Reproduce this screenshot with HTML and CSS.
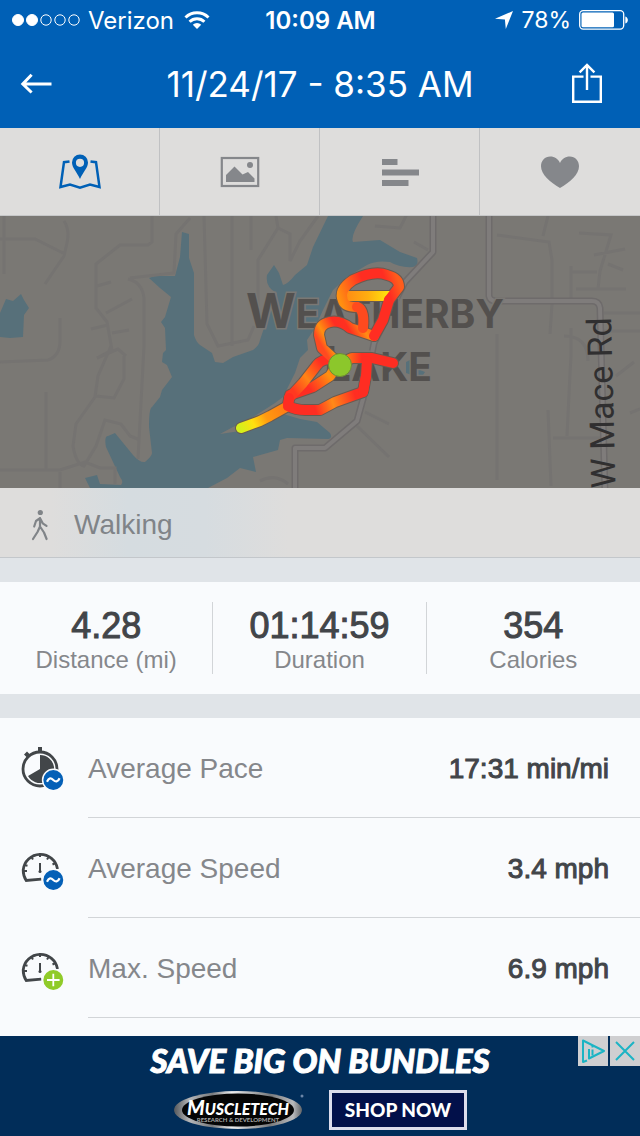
FILE: index.html
```
<!DOCTYPE html>
<html lang="en">
<head>
    <meta charset="UTF-8">
    <meta name="viewport" content="width=device-width, initial-scale=1.0">
    <title>Workout - 11/24/17</title>
    <link rel="stylesheet" href="styles.css">
</head>
<body>
    <header class="top">
        <div class="status-bar">
            <div class="status-left">
                <svg width="68" height="14" viewBox="0 0 68 14" fill="none" stroke="#fff">
                    <circle cx="6" cy="7" r="5.5" fill="#fff"/>
                    <circle cx="20" cy="7" r="5.5" fill="#fff"/>
                    <circle cx="34" cy="7" r="5.2"/>
                    <circle cx="48" cy="7" r="5.2"/>
                    <circle cx="62" cy="7" r="5.2"/>
                </svg>
                <span>Verizon</span>
                <svg class="wifi" width="26" height="20" viewBox="0 0 26 20" fill="none" stroke="#fff" stroke-width="3">
                    <path d="M1.5 7.5a16.5 16.5 0 0 1 23 0M5.6 11.8a10.6 10.6 0 0 1 14.8 0"/>
                    <path d="M13 19l-4.2-4.3a6 6 0 0 1 8.4 0z" fill="#fff" stroke="none"/>
                </svg>
            </div>
            <span class="clock">10:09 AM</span>
            <div class="status-right">
                <svg width="18" height="18" viewBox="0 0 20 20" fill="#fff"><path d="M20 0L12 20l-1-10.500L0 8.500z"/></svg>
                <span class="percent">78%</span>
                <svg width="50" height="20" viewBox="0 0 50 20" fill="#fff">
                    <rect x="0.7" y="0.7" width="44" height="18.4" rx="3.5" fill="none" stroke="#fff" stroke-width="1.3"/>
                    <rect x="2.5" y="2.5" width="32.5" height="14.8" rx="1.5"/>
                    <path d="M46.3 6.5c3.4 1 3.4 6 0 7z"/>
                </svg>
            </div>
        </div>
        <div class="nav-bar">
            <button type="button" class="nav-btn" aria-label="Back">
                <svg width="32" height="22" viewBox="0 0 32 22" fill="none" stroke="#fff" stroke-width="3">
                    <path d="M2.8 11H31.5M11.6 1.8L2.8 11l8.8 8.500"/>
                </svg>
            </button>
            <h1>11/24/17 - 8:35 AM</h1>
            <button type="button" class="nav-btn share" aria-label="Share">
                <svg width="32" height="42" viewBox="0 0 32 42" fill="none" stroke="#fff" stroke-width="2.4">
                    <path d="M12.5 13.600H2.200v25.200h27.600V13.600H19.500M16 27V2.500M8.600 9.400L16 2l7.400 7.400"/>
                </svg>
            </button>
        </div>
    </header>

    <nav class="tabs">
        <button type="button" class="tab active" aria-label="Map">
            <svg width="44" height="38" viewBox="0 0 44 38" fill="none" stroke="currentColor" stroke-width="2.5">
                <path d="M11.5 8.400L6 9.200 2.500 34l9.500-2.500L22 34.700l10-3.200 9.500 2.500L38 9.200l-5.500-.8"/>
                <path d="M22 1.500a8 8 0 0 0-8 8c0 5 4.500 9 8 16.500 3.500-7.500 8-11.500 8-16.500a8 8 0 0 0-8-8zm0 4.200a4.100 4.100 0 1 1 0 8.200 4.100 4.100 0 0 1 0-8.200z" fill="currentColor" stroke="none"/>
            </svg>
        </button>
        <button type="button" class="tab" aria-label="Photos">
            <svg width="40" height="32" viewBox="0 0 40 32" fill="currentColor">
                <rect x="1.8" y="2" width="36.4" height="28" fill="none" stroke="currentColor" stroke-width="2.2"/>
                <path d="M6 26v-7l8.500-8.500 8 8L28 16l6.500 6.500V26z"/>
                <circle cx="30" cy="9" r="3"/>
            </svg>
        </button>
        <button type="button" class="tab" aria-label="Splits">
            <svg width="38" height="30" viewBox="0 0 38 30" fill="currentColor">
                <path d="M1 2h15.500v6H1zM1 12.500h37v6H1zM1 23h26.500v6H1z"/>
            </svg>
        </button>
        <button type="button" class="tab" aria-label="Heart rate">
            <svg width="40" height="34" viewBox="0 0 40 34" fill="currentColor">
                <path d="M20 33C10 27 1 19.500 1 11.200 1 5.500 5 1.500 10.200 1.500c4.500 0 8 2.500 9.800 6.500 1.800-4 5.300-6.500 9.800-6.500C35 1.500 39 5.500 39 11.200 39 19.500 30 27 20 33z"/>
            </svg>
        </button>
    </nav>

    <svg class="map" viewBox="0 0 640 272" preserveAspectRatio="xMidYMid slice">
        <defs>
            <linearGradient id="tail" gradientUnits="userSpaceOnUse" x1="240" y1="212" x2="290" y2="186">
                <stop offset="0" stop-color="#d4f01c"/>
                <stop offset=".25" stop-color="#ffe00f"/>
                <stop offset=".5" stop-color="#ff9a10"/>
                <stop offset=".9" stop-color="#ff7a14"/>
                <stop offset="1" stop-color="#ff2d22"/>
            </linearGradient>
            <linearGradient id="south" gradientUnits="userSpaceOnUse" x1="288" y1="190" x2="368" y2="165">
                <stop offset=".3" stop-color="#ff2d22"/>
                <stop offset=".52" stop-color="#ff8a18"/>
                <stop offset=".8" stop-color="#ff2d22"/>
            </linearGradient>
            <linearGradient id="middle" gradientUnits="userSpaceOnUse" x1="290" y1="180" x2="337" y2="146">
                <stop offset=".35" stop-color="#ff2d22"/>
                <stop offset=".75" stop-color="#ff9010"/>
                <stop offset="1" stop-color="#ff6a18"/>
            </linearGradient>
            <linearGradient id="west" gradientUnits="userSpaceOnUse" x1="290" y1="180" x2="337" y2="142">
                <stop offset=".1" stop-color="#ff3820"/>
                <stop offset=".4" stop-color="#ff8415"/>
                <stop offset=".75" stop-color="#ff2d22"/>
            </linearGradient>
            <linearGradient id="neck" gradientUnits="userSpaceOnUse" x1="330" y1="144" x2="385" y2="112">
                <stop offset="0" stop-color="#ff4a20"/>
                <stop offset=".12" stop-color="#ff9010"/>
                <stop offset=".35" stop-color="#ff2d22"/>
                <stop offset=".5" stop-color="#ff3020"/>
                <stop offset=".7" stop-color="#ff8c14"/>
                <stop offset="1" stop-color="#ff2d22"/>
            </linearGradient>
            <linearGradient id="north" gradientUnits="userSpaceOnUse" x1="342" y1="90" x2="400" y2="70">
                <stop offset="0" stop-color="#ff9010"/>
                <stop offset=".25" stop-color="#ff5a1c"/>
                <stop offset=".45" stop-color="#ff2d22"/>
                <stop offset=".8" stop-color="#ff2d22"/>
                <stop offset="1" stop-color="#ff5c1c"/>
            </linearGradient>
            <linearGradient id="bar" gradientUnits="userSpaceOnUse" x1="345" y1="0" x2="391" y2="0">
                <stop offset="0" stop-color="#ff8a14"/>
                <stop offset=".5" stop-color="#ffae10"/>
                <stop offset="1" stop-color="#ffec0c"/>
            </linearGradient>
            <linearGradient id="spur" gradientUnits="userSpaceOnUse" x1="342" y1="0" x2="370" y2="0">
                <stop offset="0" stop-color="#ff9010"/>
                <stop offset=".7" stop-color="#ff2d22"/>
            </linearGradient>
            <path id="major" d="M433 -4V36L405 66 374 127 363 183 357 205 325 232 295 232V276M489 -4V80Q490 85 496 85H592Q599 85 600 92L605 276"/>
            <path id="route-all" d="M241 212L260 205 270 200 288 190M288 190Q296 194 305 194L320 194 335 186 363 176 366 160 367 145M337 149L330 160 313 171 290 179 288 188M337 143Q322 142 317 149L303 167 289 182M334 143L322 132 319 119Q319 108 330 106 340 104 350 112L374 120 383 104 389 84 399 71Q399 62 387 59 374 54 353 64 338 74 343 85 345 91 357 91 365 93 363 112M345 80H392M341 147L352 142H372L393 147"/>
        </defs>

        <rect class="land" width="640" height="272"/>

        <path class="water" d="M182 16L189 18V42L194 57V119Q196 126 200 129L212 137 215 146 223 147 233 141 253 134Q259 130 260 124L270 94 277 77Q265 72 267 59L274 49 279 57 283 69Q288 68 295 59L307 49 313 31 328 0H363Q350 20 353 26L380 24 400 36 417 42Q419 50 413 51 400 52 390 46 376 44 367 49L347 61 333 74 323 94 315 112 307 124 308 134 300 142 295 157 283 181 275 187 247 205 233 211 220 218 247 214 283 198 300 203 317 206 330 217Q333 222 328 223L287 222 280 224 278 234 253 241 256 256 240 252 227 262 208 272H90L85 262 97 259 100 268 121 269Q124 266 120 261L106 231Q104 220 108 220L115 217 133 239Q140 247 145 246 152 240 152 237L149 211Q149 192 152 191L160 181 162 174 172 161 167 149 162 146 163 137 166 134 165 112 161 106 165 101 171 81 160 72 149 62 155 60 175 60 180 41z"/>
        <path class="water" d="M6 83L13 85 21 78 24 84 29 92 24 99 23 121 10 122 0 121V97z"/>
        <path class="water" d="M406 146l6-3 1 8 12 5-4 6-15-5z"/>

        <g class="minor">
            <path d="M4 0V58M0 23H35L65 38M64 5Q70 14 67 27L64 40 45 68M152 0V26L148 29H120L96 48V92L107 106 112 134 97 142 118 133 126 140M97 70l14-4M106 97l26-14M91 113l17-4M112 117l17-3M111 130L98 160 95 181 76 208 73 230Q76 248 84 250L96 230 105 204 121 208 130 220 140 224M96 180L114 182 124 163V140M128 63Q142 66 144 82V130L138 243M60 102V125Q60 140 48 144L0 146M46 176V255M0 254H60L85 246 100 252H115V268M60 256V272M130 62L174 57 176 18 190 2M204 0L207 108 218 130 248 124 254 110M232 0V130M251 0V34M276 0L278 12 258 44V90M278 12L290 18V45L300 25 318 0M260 265q15-8 28 3"/>
            <path d="M375 10l25 2 8-16M414 26l14 8M497 19l52 7 3 18V82M543 20L548 0M552 88l-2 30M497 118V264M579 17l32 2L600 55 598 73M571 50V87M576 73H626M594 39l31-6M572 56H597M608 48l15 6M571 112V140L570 158 567 220M548 194l3 76M553 222H600M564 120Q588 120 588 145M604 97H640M604 115H640M365 196l24 12M357 210l32 31M630 197l10-4M616 160l18-14"/>
        </g>
        <use href="#major" class="road-edge"/>
        <use href="#major" class="road-fill"/>

        <g class="town">
            <text x="246" y="112"><tspan class="cap">W</tspan>EATHERBY</text>
            <text x="324" y="165"><tspan class="cap">L</tspan>AKE</text>
        </g>
        <text class="street" text-anchor="end" transform="translate(611 101) rotate(-91.5)">NW Mace Rd</text>

        <use href="#route-all" class="route-edge"/>
        <g class="route">
            <path stroke="url(#tail)" d="M241 212L260 205 270 200 288 190"/>
            <path stroke="url(#middle)" d="M337 149L330 160 313 171 290 179 288 188"/>
            <path stroke="url(#west)" d="M337 143Q322 142 317 149L303 167 289 182"/>
            <path stroke="url(#south)" d="M289 182L288 190Q296 194 305 194L320 194 335 186 363 176 366 160"/>
            <path stroke="url(#spur)" d="M341 147L352 142H372L393 147"/>
            <path stroke="#ff2d22" d="M367 145L366 160 363 176"/>
            <path stroke="url(#bar)" stroke-linecap="butt" d="M345 80H391"/>
            <path stroke="url(#neck)" d="M334 143L322 132 319 119Q319 108 330 106 340 104 350 112L374 120"/>
            <path stroke="#ff2d22" d="M374 120L383 104 389 84"/>
            <path stroke="url(#north)" d="M389 84L399 71Q399 62 387 59 374 54 353 64 338 74 343 85 345 91 357 91"/>
            <path stroke="#ff4a1e" d="M357 91Q365 93 363 112"/>
        </g>
        <circle cx="340" cy="149" r="11.5" class="pin"/>
    </svg>

    <div class="activity">
        <svg width="18" height="32" viewBox="0 0 18 32" fill="none" stroke="currentColor" stroke-width="2.2" stroke-linecap="round" stroke-linejoin="round">
            <circle cx="9.3" cy="3.5" r="2.6" fill="currentColor" stroke="none"/>
            <path d="M9 9v8.500M9 9.200L5 12 3.200 17.500M9.200 9.500l2.500 4.800 3.800 2.500M9 17.500L6.500 23 2 30M9 17.500l4 6 2.600 6.500"/>
        </svg>
        <span>Walking</span>
    </div>

    <dl class="stats">
        <div class="stat">
            <dt>Distance (mi)</dt>
            <dd>4.28</dd>
        </div>
        <div class="stat">
            <dt>Duration</dt>
            <dd>01:14:59</dd>
        </div>
        <div class="stat">
            <dt>Calories</dt>
            <dd>354</dd>
        </div>
    </dl>

    <ul class="details">
        <li>
            <svg width="44" height="46" viewBox="0 0 44 46" fill="none">
                <circle cx="20" cy="24" r="17" stroke="#424649" stroke-width="2.8"/>
                <path d="M18 2h4v5h-4zM4 9.500l3-3 3.500 3.500-3 3z" fill="#424649"/>
                <path d="M20 24V10A14 14 0 1 1 8 31z" fill="#424649"/>
                <circle cx="33.3" cy="35" r="10.7" fill="#0460b7" stroke="#f9fbfd" stroke-width="1.5"/>
                <path d="M27 36.800c2-4.500 4-4 6.300-1.800s4.500 2.200 6.300-1.800" stroke="#fff" stroke-width="2.2"/>
            </svg>
            <div class="row">
                <span class="name">Average Pace</span>
                <span class="value">17:31 min/mi</span>
            </div>
        </li>
        <li>
            <svg width="44" height="46" viewBox="0 0 44 46" fill="none">
                <path d="M37.500 24A17.300 17.300 0 0 0 3.200 25q0 6 3 10.500l15-1.300" stroke="#424649" stroke-width="2.8"/>
                <path d="M20 8v4M11 11.500l2 3M29 11.500l-2 3M4.500 20l3 .8M35.500 18l-3 1.500M4 26h3" stroke="#424649" stroke-width="2"/>
                <path d="M20 18v9" stroke="#424649" stroke-width="2"/>
                <circle cx="20" cy="26.5" r="1.5" fill="#424649"/>
                <circle cx="33.3" cy="35" r="10.7" fill="#0460b7" stroke="#f9fbfd" stroke-width="1.5"/>
                <path d="M27 36.800c2-4.500 4-4 6.300-1.800s4.500 2.200 6.300-1.800" stroke="#fff" stroke-width="2.2"/>
            </svg>
            <div class="row">
                <span class="name">Average Speed</span>
                <span class="value">3.4 mph</span>
            </div>
        </li>
        <li>
            <svg width="44" height="46" viewBox="0 0 44 46" fill="none">
                <path d="M37.500 24A17.300 17.300 0 0 0 3.200 25q0 6 3 10.500l15-1.300" stroke="#424649" stroke-width="2.8"/>
                <path d="M20 8v4M11 11.500l2 3M29 11.500l-2 3M4.500 20l3 .8M35.500 18l-3 1.500M4 26h3" stroke="#424649" stroke-width="2"/>
                <path d="M20 18v9" stroke="#424649" stroke-width="2"/>
                <circle cx="20" cy="26.5" r="1.5" fill="#424649"/>
                <circle cx="33.3" cy="35" r="10.7" fill="#90cb29" stroke="#f9fbfd" stroke-width="1.5"/>
                <path d="M27 35h12.600M33.300 28.700v12.600" stroke="#fff" stroke-width="1.8"/>
            </svg>
            <div class="row">
                <span class="name">Max. Speed</span>
                <span class="value">6.9 mph</span>
            </div>
        </li>
    </ul>

    <aside class="ad">
        <p class="ad-title">SAVE BIG ON BUNDLES</p>
        <div class="ad-row">
            <svg width="132" height="40" viewBox="0 0 132 40">
                <defs>
                    <linearGradient id="chrome">
                        <stop offset="0" stop-color="#55585c"/>
                        <stop offset=".12" stop-color="#b5b6b8"/>
                        <stop offset=".3" stop-color="#777a7d"/>
                        <stop offset=".45" stop-color="#eeeeee"/>
                        <stop offset=".75" stop-color="#77797c"/>
                        <stop offset=".93" stop-color="#b9babc"/>
                        <stop offset="1" stop-color="#606367"/>
                    </linearGradient>
                </defs>
                <ellipse cx="65" cy="20" rx="64" ry="19" fill="url(#chrome)"/>
                <ellipse cx="65" cy="20" rx="56" ry="16.5" fill="#050505"/>
                <text x="65" y="25" text-anchor="middle" class="brand"><tspan class="brand-cap">M</tspan>USCLETECH</text>
                <text x="65" y="32" text-anchor="middle" class="brand-sub">RESEARCH &amp; DEVELOPMENT</text>
                <circle cx="129" cy="6" r="1.5" fill="#6c86a8"/>
            </svg>
            <a class="shop" href="#">SHOP NOW</a>
        </div>
        <div class="ad-controls">
            <button type="button" aria-label="Ad info">
                <svg width="26" height="26" viewBox="0 0 26 26" fill="none" stroke="#1bb4c4" stroke-width="2" stroke-linejoin="round">
                    <path d="M7 22.500L3 24V2.500l21 10.500L9 20.500V11"/>
                    <path d="M12.500 11.500v6M12.500 7.500v2"/>
                </svg>
            </button>
            <button type="button" aria-label="Close ad">
                <svg width="26" height="26" viewBox="0 0 26 26" fill="none" stroke="#1bb4c4" stroke-width="2">
                    <path d="M4 4l18 18M22 4L4 22"/>
                </svg>
            </button>
        </div>
    </aside>
</body>
</html>
```
FILE: styles.css
```
:root {
    --blue: #0060b6;
    --gap-bg: #e0e4e8;
    --card-bg: #f9fbfd;
    --bar-bg: #dedddc;
    --muted: #85878b;
    --text: #424549;
}

* {
    box-sizing: border-box;
}

body {
    margin: 0;
    min-height: 100vh;
    display: flex;
    flex-direction: column;
    background: var(--gap-bg);
    font-family: "Liberation Sans", Arial, sans-serif;
    color: var(--text);
}

button {
    border: none;
    padding: 0;
    background: none;
    cursor: pointer;
}

svg {
    display: block;
    flex-shrink: 0;
}

.top {
    background: var(--blue);
    color: #fff;
    font-family: Inter, sans-serif;
}

.status-bar {
    display: grid;
    grid-template-columns: 1fr auto 1fr;
    align-items: center;
    height: 40px;
    padding: 0 11px 0 12px;
    font-size: 24px;
}

.status-left {
    display: flex;
    align-items: center;
    gap: 8px;
}

.wifi {
    margin-left: 2px;
}

.status-right {
    display: flex;
    align-items: center;
    justify-content: flex-end;
    gap: 8px;
}

.percent {
    font-size: 23px;
}

.clock {
    font-weight: 600;
}

.nav-bar {
    display: grid;
    grid-template-columns: 1fr auto 1fr;
    align-items: center;
    height: 88px;
    padding: 0 20px;
}

.nav-btn {
    justify-self: start;
}

.nav-btn.share {
    justify-self: end;
    margin-right: 17px;
}

.nav-bar h1 {
    margin: 0;
    font-size: 35px;
    font-weight: 400;
}

.tabs {
    display: grid;
    grid-template-columns: repeat(4, 1fr);
    height: 88px;
    border-bottom: 1px solid #c6c7c8;
    background: var(--bar-bg);
}

.tab {
    display: flex;
    align-items: center;
    justify-content: center;
    border-right: 1px solid #c0c1c3;
    color: var(--muted);
}

.tab:last-child {
    border-right: none;
}

.tab.active {
    color: var(--blue);
}

.map {
    width: 100%;
}

.land {
    fill: #7a7874;
}

.water {
    fill: #57707a;
}

.minor {
    fill: none;
    stroke: #757371;
    stroke-width: 3px;
}

.road-edge,
.road-fill {
    fill: none;
    stroke: #6e6b6b;
    stroke-width: 7px;
    stroke-linejoin: round;
}

.road-fill {
    stroke: #7f7c7b;
    stroke-width: 4px;
}

.town {
    font-family: Inter, sans-serif;
    font-size: 39px;
    font-weight: 700;
    fill: #53504e;
    stroke: #7a7874;
    stroke-width: 3px;
    paint-order: stroke;
}

.town .cap {
    font-size: 48px;
}

.street {
    font-family: Roboto, sans-serif;
    font-size: 34px;
    fill: #302f30;
}

.route,
.route-edge {
    fill: none;
    stroke-width: 10px;
    stroke-linecap: round;
    stroke-linejoin: round;
}

.route-edge {
    stroke: #6a5a50;
    stroke-width: 12px;
}

.pin {
    fill: #8cc72b;
    stroke: #6f8a35;
}

.activity {
    display: flex;
    align-items: center;
    gap: 25px;
    height: 70px;
    padding: 4px 31px 0;
    border-bottom: 1px solid #c3c7cb;
    background: linear-gradient(90deg, var(--bar-bg) 8%, #d5dce0 20%, #d6dce0 32%, var(--bar-bg) 45%);
    color: #808488;
    font-size: 28px;
}

.stats {
    display: grid;
    grid-template-columns: repeat(3, 1fr);
    margin: 24px 0;
    padding: 20px 0;
    background: var(--card-bg);
}

.stat {
    display: flex;
    flex-direction: column-reverse;
    align-items: center;
    height: 72px;
    border-right: 1px solid #d2d5d8;
}

.stat:last-child {
    border-right: none;
}

.stat dt {
    color: var(--muted);
    font-size: 24px;
    line-height: 28px;
}

.stat dd {
    margin: 0;
    font-size: 36px;
    line-height: 40px;
    -webkit-text-stroke: 1px currentColor;
}

.details {
    flex: 1;
    margin: 0;
    padding: 0;
    list-style: none;
    background: var(--card-bg);
}

.details li {
    display: flex;
    align-items: center;
    gap: 24px;
    height: 100px;
    padding-left: 20px;
}

.row {
    display: flex;
    flex: 1;
    align-items: center;
    justify-content: space-between;
    height: 100%;
    padding: 2px 31px 0 0;
    border-bottom: 1px solid #d2d5d8;
    font-size: 28px;
}

.name {
    color: var(--muted);
}

.value {
    -webkit-text-stroke: 1px currentColor;
}

.ad {
    position: relative;
    height: 100px;
    padding-top: 4px;
    background: #012d59;
    color: #fff;
    font-family: Lato, sans-serif;
    text-align: center;
}

.ad-title {
    margin: 0;
    font-size: 33px;
    font-style: italic;
    font-weight: 900;
    line-height: 40px;
    -webkit-text-stroke: 1px #fff;
}

.ad-row {
    display: flex;
    align-items: center;
    justify-content: center;
    gap: 24px;
    margin-top: 10px;
}

.brand {
    fill: #fff;
    font-size: 16px;
    font-style: italic;
    font-weight: 900;
}

.brand-cap {
    font-size: 20px;
}

.brand-sub {
    fill: #a9a9a9;
    font-size: 6px;
    font-weight: 700;
}

.shop {
    padding: 5px 13px;
    border: 3px solid #dcdcec;
    background: #02104a;
    color: #fff;
    font-size: 19px;
    font-weight: 900;
    line-height: 24px;
    text-decoration: none;
}

.ad-controls {
    position: absolute;
    top: 0;
    right: 0;
    display: flex;
    gap: 2px;
}

.ad-controls button {
    display: flex;
    align-items: center;
    justify-content: center;
    width: 30px;
    height: 30px;
    background: #cfcfd1;
}
```
